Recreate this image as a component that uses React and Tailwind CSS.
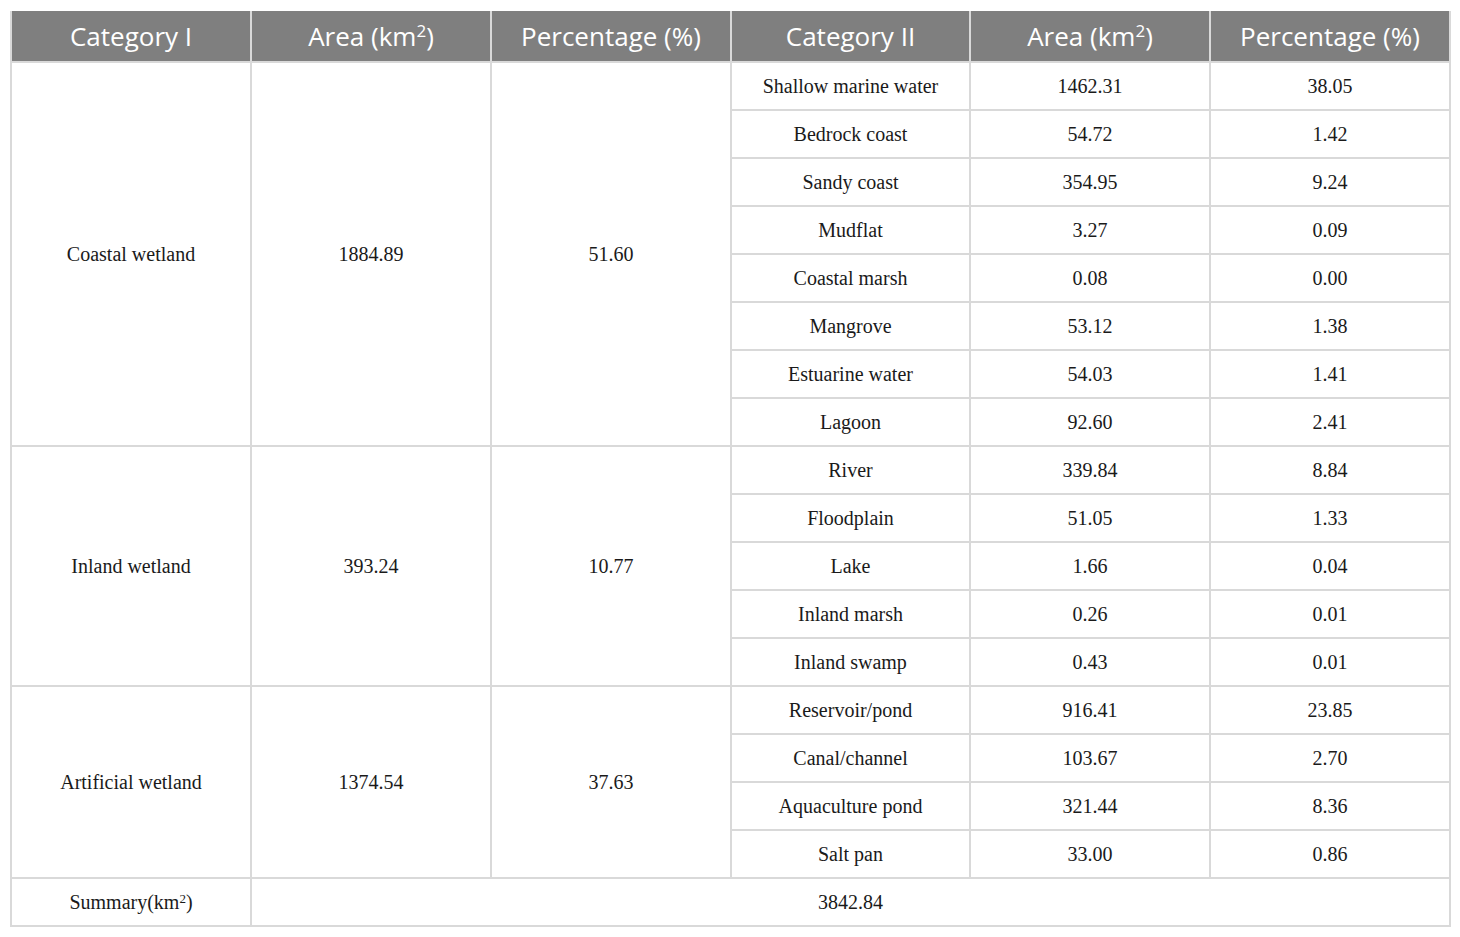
const groups = [
  {
    name: "Coastal wetland",
    area: "1884.89",
    pct: "51.60",
    items: [
      ["Shallow marine water", "1462.31", "38.05"],
      ["Bedrock coast", "54.72", "1.42"],
      ["Sandy coast", "354.95", "9.24"],
      ["Mudflat", "3.27", "0.09"],
      ["Coastal marsh", "0.08", "0.00"],
      ["Mangrove", "53.12", "1.38"],
      ["Estuarine water", "54.03", "1.41"],
      ["Lagoon", "92.60", "2.41"],
    ],
  },
  {
    name: "Inland wetland",
    area: "393.24",
    pct: "10.77",
    items: [
      ["River", "339.84", "8.84"],
      ["Floodplain", "51.05", "1.33"],
      ["Lake", "1.66", "0.04"],
      ["Inland marsh", "0.26", "0.01"],
      ["Inland swamp", "0.43", "0.01"],
    ],
  },
  {
    name: "Artificial wetland",
    area: "1374.54",
    pct: "37.63",
    items: [
      ["Reservoir/pond", "916.41", "23.85"],
      ["Canal/channel", "103.67", "2.70"],
      ["Aquaculture pond", "321.44", "8.36"],
      ["Salt pan", "33.00", "0.86"],
    ],
  },
];

const td = "border-2 border-[#d9d9d9] text-center align-middle h-[48px] p-0";

const App = () => {
  return (
    <div className="w-[1460px] h-[937px] bg-white pt-[11px] pl-[10px]">
      <table className="table-fixed border-collapse w-[1439px] text-[20px] text-[#1a1a1a] font-['Liberation_Serif',serif]">
        <colgroup>
          <col className="w-[240px]" />
          <col className="w-[240px]" />
          <col className="w-[240px]" />
          <col className="w-[239px]" />
          <col className="w-[240px]" />
          <col className="w-[240px]" />
        </colgroup>
        <thead>
          <tr className="bg-[#7f7f7f] text-white text-[26px] font-['Open_Sans',sans-serif]">
            {["Category I", "Area", "Percentage (%)", "Category II", "Area", "Percentage (%)"].map((h, i) => (
              <th key={i} className="border-2 border-[#d9d9d9] border-t-0 h-[51px] font-normal p-0">
                {h === "Area" ? (
                  <>
                    Area (km<sup className="text-[17px]">2</sup>)
                  </>
                ) : (
                  h
                )}
              </th>
            ))}
          </tr>
        </thead>
        <tbody>
          {groups.map((g) =>
            g.items.map((it, i) => (
              <tr key={g.name + i}>
                {i === 0 && (
                  <>
                    <td rowSpan={g.items.length} className={td}>{g.name}</td>
                    <td rowSpan={g.items.length} className={td}>{g.area}</td>
                    <td rowSpan={g.items.length} className={td}>{g.pct}</td>
                  </>
                )}
                <td className={td}>{it[0]}</td>
                <td className={td}>{it[1]}</td>
                <td className={td}>{it[2]}</td>
              </tr>
            ))
          )}
          <tr>
            <td className={td}>
              Summary(km<sup className="text-[13px]">2</sup>)
            </td>
            <td colSpan={5} className={td}>3842.84</td>
          </tr>
        </tbody>
      </table>
    </div>
  );
};

export default App;
